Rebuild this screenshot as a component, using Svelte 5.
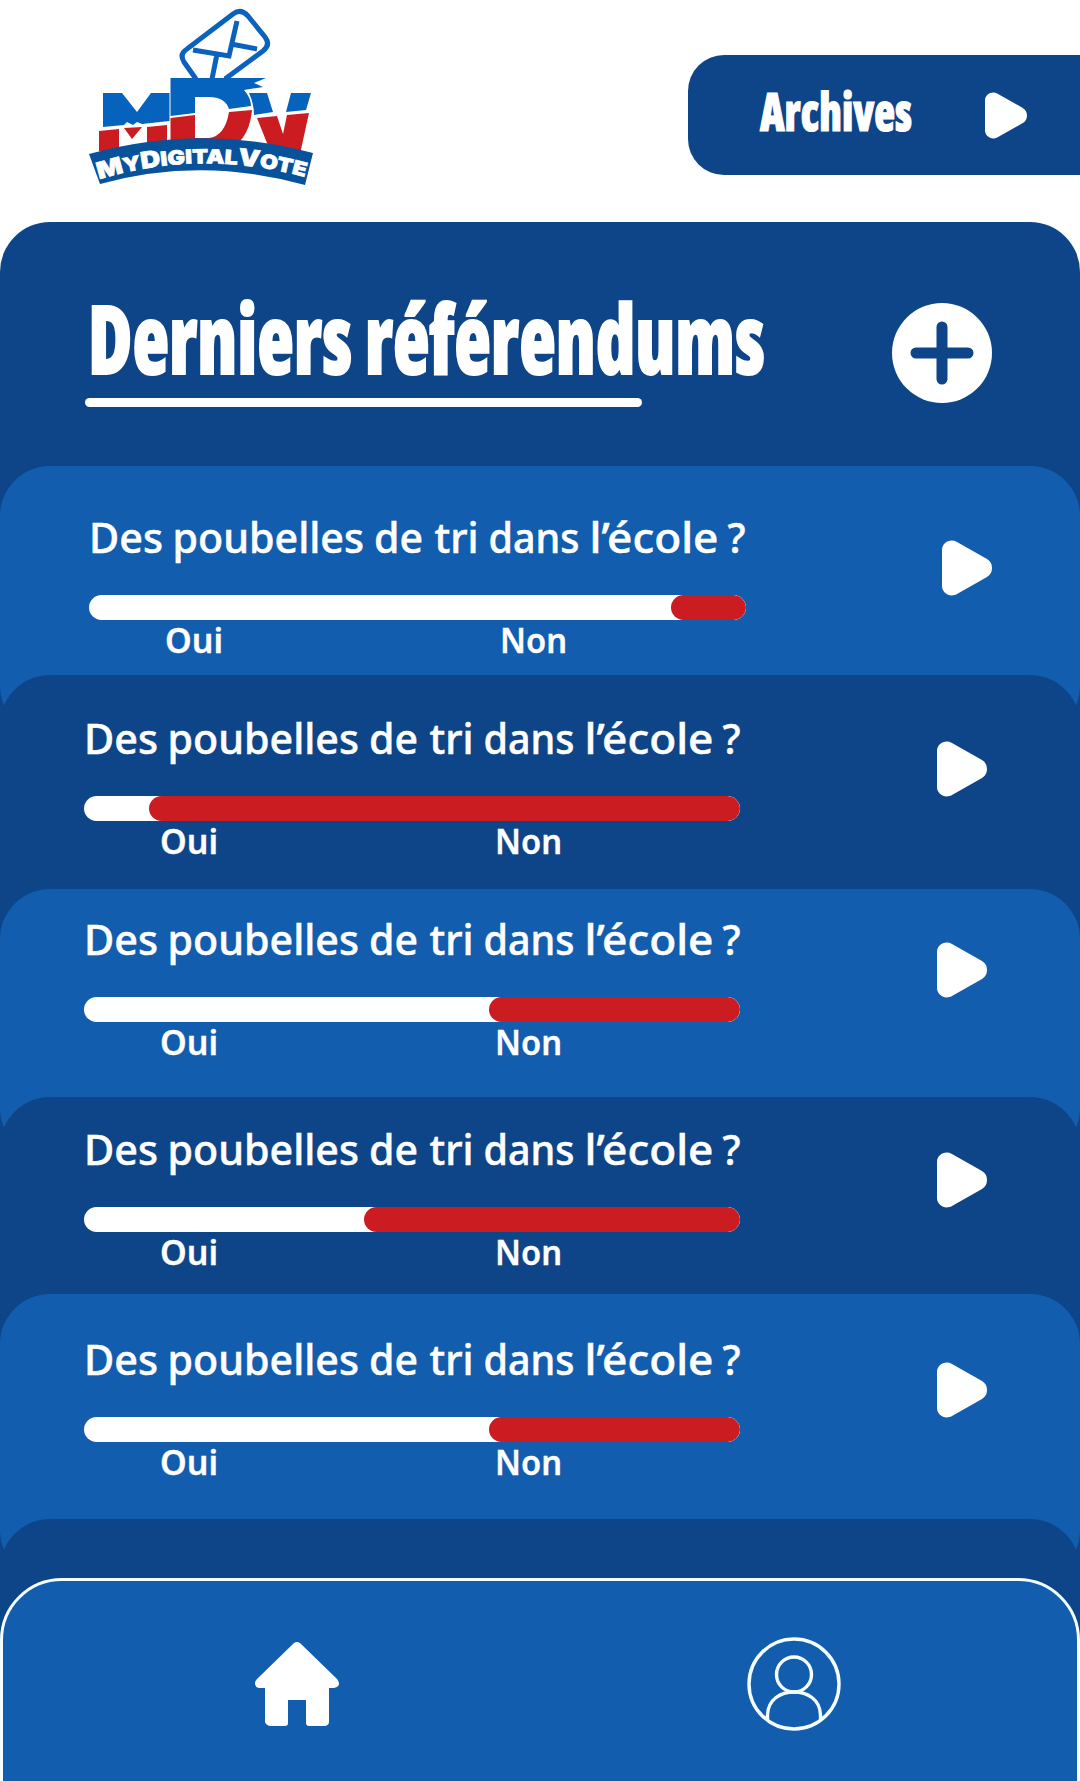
<script>
  const question = [
    { text: 'Des', x: 0, length: 74 },
    { text: 'poubelles', x: 83.5, length: 191.5 },
    { text: 'de', x: 285, length: 49 },
    { text: 'tri', x: 345.5, length: 44 },
    { text: 'dans', x: 399.5, length: 91 },
    { text: 'l’école', x: 500.5, length: 129 },
    { text: '?', x: 638.5, length: 18 },
  ];
  const polls = [
    { no: 75, tone: 'light first' },
    { no: 591, tone: 'dark second' },
    { no: 251, tone: 'light third' },
    { no: 376, tone: 'dark fourth' },
    { no: 251, tone: 'light fifth' },
  ];
</script>

{#snippet play(size)}
  <svg class={size} viewBox="0 0 50 56" aria-hidden="true">
    <path d="M0 10C0 3 8-2 15 2L45 19Q50 22 50 28Q50 34 45 37L15 54C8 58 0 53 0 46Z" fill="#fff" />
  </svg>
{/snippet}

<main>
  <header>
    <svg class="logo" viewBox="0 0 260 200" aria-label="MyDigitalVote">
      <g fill="none" stroke="#0b62bd" stroke-width="5">
        <path d="M126 79L114 62Q109 54 117 49L163 14Q171 8 178 16L195 37Q201 45 193 51L155 79" />
        <path d="M167 21L159 56L123 50M161 44L187 49M147 54L142 79" />
      </g>
      <path fill="#0563be" d="M33 93H52L67 112L81 93H99.500V121L72 124L67 122L63 125L57 122L54 125L33 127Z" />
      <path fill="#0563be" d="M100.500 78H196L184 83L193 87L174 90Q181 98 181 106L159 109Q155 97 139 97H125V113L100.500 116Z" />
      <path fill="#0563be" d="M179 93H197L203 112L184 115Q184 104 179 93ZM221 93H241L236 110L216 112Z" />
      <path fill="#cb1c22" d="M29 131L49 129V151H29ZM54 128L72 127L62 139ZM77 127L97 125V145H77ZM100.500 118L125 115V138H139Q155 136 159 112L182 110Q180 132 168 143L100.500 145ZM187 118L207 116L213 134L217 115L239 113L230 154L199 148Z" />
      <path fill="#07529a" d="M19 154Q131 123 243 153L235 185Q131 156 30 184Z" />
      <path id="arc" fill="none" d="M29 179.500Q131 148 238 178" />
      <text class="arc-text" textLength="209" lengthAdjust="spacingAndGlyphs"><textPath href="#arc"><tspan>M</tspan><tspan class="sc">Y</tspan><tspan>D</tspan><tspan class="sc">IGITAL</tspan><tspan>V</tspan><tspan class="sc">OTE</tspan></textPath></text>
    </svg>
    <button class="archives">
      <svg class="archives-text" viewBox="0 0 154 60"><text x="1" y="46" textLength="152" lengthAdjust="spacingAndGlyphs">Archives</text></svg>
      {@render play('play-small')}
    </button>
  </header>

  <div class="stack">
    <section class="panel">
      <div class="heading">
        <svg class="title" viewBox="0 0 690 96">
          <text x="3" y="74" textLength="677" lengthAdjust="spacingAndGlyphs">Derniers référendums</text>
        </svg>
        <div class="rule"></div>
      </div>
      <svg class="add" viewBox="0 0 100 100"><circle cx="50" cy="50" r="50" fill="#fff" /><path d="M50 24V76M24 50H76" stroke="#0d4588" stroke-width="11" stroke-linecap="round" /></svg>
    </section>

    {#each polls as poll}
      <section class="card {poll.tone}">
        <div class="poll">
          <svg class="question" viewBox="0 0 656 54">
            {#each question as word}
              <text x={word.x} y="42" textLength={word.length} lengthAdjust="spacingAndGlyphs">{word.text}</text>
            {/each}
          </svg>
          <div class="bar"><div class="no" style="width:{poll.no}px"></div></div>
          <svg class="labels" viewBox="0 0 656 44"><text x="76" y="33" textLength="58" lengthAdjust="spacingAndGlyphs">Oui</text><text x="411" y="33" textLength="67" lengthAdjust="spacingAndGlyphs">Non</text></svg>
        </div>
        {@render play('play')}
      </section>
    {/each}

    <section class="card dark last"></section>

    <nav>
      <svg class="home" viewBox="0 0 84 84"><path fill="#fff" d="M39 1Q42-1 45 1L82 37Q86 42 82 45L79 46H74V80Q74 83 70 84H54Q51 84 51 81V58H33V81Q33 84 30 84H15Q11 83 10 80V46H5Q0 46 0 41Q0 39 2 37Z" /></svg>
      <svg class="user" viewBox="0 0 94 94" fill="none" stroke="#f5ffff" stroke-width="3.400"><circle cx="47" cy="47" r="45" /><circle cx="47" cy="37.500" r="17.500" /><path d="M20.500 83V78C21 62 34 55 47 55S73 62 73.500 78V83" /></svg>
    </nav>
  </div>
</main>

<style>
  :global(body) { margin: 0; background: #fff; }
  main { width: 1080px; height: 1781px; overflow: hidden; display: flex; flex-direction: column; }
  header, .stack, .stack > * { box-sizing: border-box; flex-shrink: 0; }
  .stack { display: flex; flex-direction: column; background: #0d4588; border-radius: 50px 50px 0 0; }
  svg { display: block; overflow: visible; }
  header { height: 222px; display: flex; justify-content: space-between; padding-left: 70px; }
  .logo { width: 260px; height: 200px; }
  .arc-text { font: 900 23px Inter, sans-serif; fill: #fff; stroke: #fff; stroke-width: .7px; }
  .sc { font-size: 19.500px; }
  .archives { box-sizing: border-box; width: 392px; height: 120px; margin-top: 55px; padding: 0 53px 0 71px; border: 0; border-radius: 36px 0 0 36px; background: #0d4588; display: flex; align-items: center; justify-content: space-between; }
  .archives-text { width: 154px; height: 60px; font: 800 53px "Open Sans", sans-serif; font-stretch: 75%; fill: #fff; stroke: #fff; stroke-width: 1.200px; }
  .play-small { width: 42px; height: 47px; }
  .panel { height: 294px; padding: 78px 88px 0 85px; display: flex; justify-content: space-between; }
  .title { width: 690px; height: 96px; font: 800 96px "Open Sans", sans-serif; font-stretch: 75%; word-spacing: -1px; fill: #fff; stroke: #fff; stroke-width: 1.800px; }
  .rule { width: 557px; height: 9px; margin-top: 2px; border-radius: 5px; background: #fff; }
  .add { width: 100px; height: 100px; margin-top: 3px; }
  .card { border-radius: 50px; margin-top: -61px; padding: 0 93px 0 84px; display: flex; justify-content: space-between; align-items: flex-start; }
  .light { background: #135dae; }
  .dark { background: #0d4588; }
  .first { height: 270px; margin-top: -50px; padding: 45px 88px 0 89px; }
  .second { height: 275px; padding-top: 37px; }
  .third { height: 269px; padding-top: 24px; }
  .fourth { height: 258px; padding-top: 26px; }
  .fifth { height: 286px; padding-top: 39px; }
  .last { height: 150px; }
  .question { width: 656px; height: 54px; font: 500 41.500px "Noto Sans", sans-serif; fill: #fff; stroke: #fff; stroke-width: .5px; }
  .bar { width: 656px; height: 25px; margin-top: 30px; border-radius: 13px; background: #fff; display: flex; justify-content: flex-end; overflow: hidden; }
  .first .bar { width: 657px; }
  .no { border-radius: 13px; background: #ca1c21; }
  .labels { width: 656px; height: 44px; font: 600 33.500px "Noto Sans", sans-serif; fill: #fff; stroke: #fff; stroke-width: .3px; }
  .play { width: 50px; height: 56px; margin-top: 29px; }
  nav { height: 300px; margin-top: -91px; border: 3px solid #f5ffff; border-radius: 62px; background: #135dae; display: flex; justify-content: space-between; align-items: flex-start; padding: 56px 236px 0 252px; }
  .home { width: 84px; height: 84px; margin-top: 5px; }
  .user { width: 94px; height: 94px; }
</style>
